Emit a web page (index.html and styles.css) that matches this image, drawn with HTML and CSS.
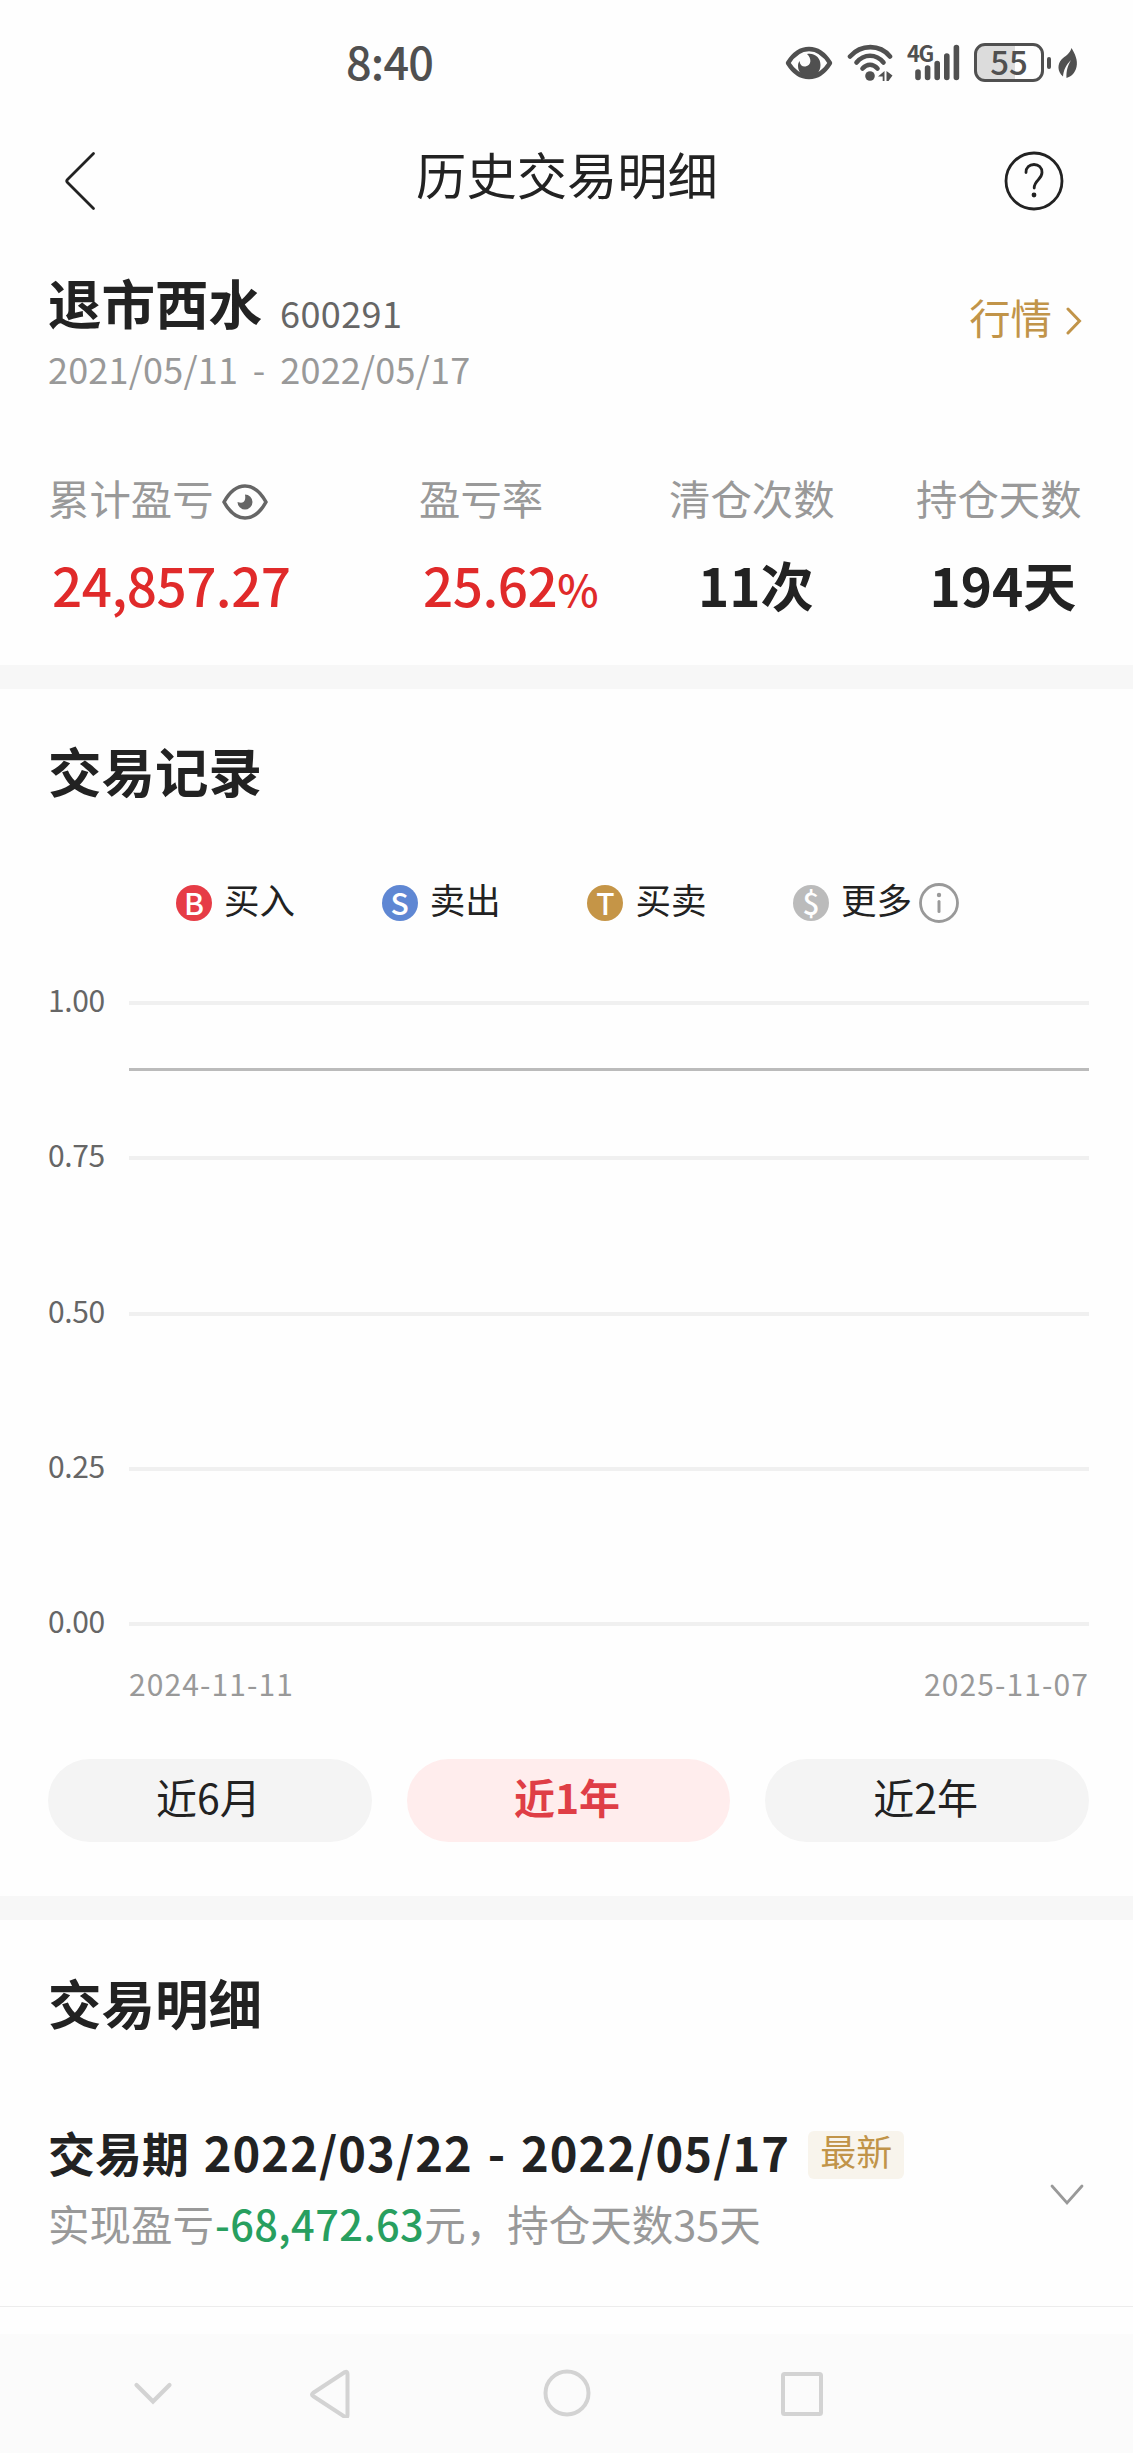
FILE: index.html
```html
<!DOCTYPE html>
<html lang="zh-CN">
<head>
    <meta charset="UTF-8">
    <meta name="viewport" content="width=device-width, initial-scale=1.0">
    <title>历史交易明细</title>
    <link rel="stylesheet" href="styles.css">
</head>
<body>
    <!-- Phone status bar -->
    <div class="status-bar">
        <span class="time">8:40</span>
        <div class="status-icons">
            <svg class="status-eye" width="48" height="34" viewBox="0 0 48 34">
                <path d="M3 17C8 9 15 3 24 3s16 6 21 14c-5 8-12 14-21 14S8 25 3 17z" fill="none" stroke="#505050" stroke-width="4.4" stroke-linejoin="round"/>
                <path d="M22 8C30 6.500 35.500 12 35.500 19c0 7-5 12-11.500 12s-11-5-11-11c0-2 .5-3.500 1.500-5 .5 4 3 6 6 5.500 6-1 6.500-8 1.500-12.500z" fill="#505050"/>
            </svg>
            <svg class="wifi" width="47" height="38" viewBox="0 0 47 38">
                <g fill="none" stroke="#505050" stroke-width="4.600" stroke-linecap="round">
                    <path d="M3 12.500C14 0 33 0 43 12.500"/>
                    <path d="M9.500 18.500C17 9.500 29 9.500 36.500 18.500"/>
                    <path d="M15.500 24.500C20 19.500 26 19.500 30.500 24.500"/>
                </g>
                <circle cx="23" cy="32" r="4.800" fill="#505050"/>
                <path d="M37.500 27v10h-1.800v-4.500H31zM39.500 27l6 4.500-4 5.500h-2z" fill="#505050"/>
            </svg>
            <div class="signal">
                <span class="network">4G</span>
                <svg width="46" height="37" viewBox="0 0 46 37">
                    <g stroke="#505050" stroke-width="5.600" stroke-linecap="round">
                        <path d="M3 28v5.500M12.600 24v9.500M22.200 19.500v14M31.800 12v21.500M41.400 3.500v30"/>
                    </g>
                </svg>
            </div>
            <div class="battery"><span>55</span></div>
            <div class="battery-cap"></div>
            <svg class="leaf" width="21" height="32" viewBox="0 0 21 32">
                <path d="M14.500 1C18 7 21 13 19.500 20c-1.500 6-5 9.500-10 11C9 24 11 18 14 13 9 18 6.500 23 6 29.500 0 24 .5 17 4.500 12.500 8 9 13 7 14.500 1z" fill="#505050"/>
            </svg>
        </div>
    </div>

    <header class="header">
        <svg class="back" width="32" height="60" viewBox="0 0 32 60">
            <path d="M29.500 2.500L3.500 28.500q-1.500 1.500 0 3L29.500 57.500" fill="none" stroke="#222" stroke-width="2.800" stroke-linecap="round"/>
        </svg>
        <h1>历史交易明细</h1>
        <svg class="help" width="60" height="60" viewBox="0 0 60 60">
            <circle cx="30" cy="30" r="28" fill="none" stroke="#222" stroke-width="2.800"/>
            <path d="M22 21.500c0-5 3.500-8 8-8s8 3 8 8c0 7-7.800 7.500-7.800 15.500" fill="none" stroke="#222" stroke-width="2.800" stroke-linecap="round"/>
            <circle cx="30" cy="44" r="2.400" fill="#222"/>
        </svg>
    </header>

    <section class="summary">
        <div class="stock">
            <div>
                <div class="stock-title">
                    <h2>退市西水</h2>
                    <span class="code">600291</span>
                </div>
                <div class="stock-dates">2021/05/11 - 2022/05/17</div>
            </div>
            <a class="quote">行情
                <svg width="16" height="28" viewBox="0 0 16 28">
                    <path d="M2 2l11.500 12L2 26" fill="none" stroke="#c19449" stroke-width="3" stroke-linecap="round"/>
                </svg>
            </a>
        </div>
        <div class="stats">
            <div class="stat">
                <div class="label">累计盈亏
                    <svg class="eye" width="48" height="38" viewBox="0 0 48 38">
                        <path d="M3 19C8 10 15 3 24 3s16 7 21 16c-5 9-12 16-21 16S8 28 3 19z" fill="none" stroke="#666" stroke-width="3.600" stroke-linejoin="round"/>
                        <path d="M24 11.500a7.500 7.500 0 1 1-7.500 7.500q4 1.500 6 0 2.500-2 1.500-7.500z" fill="#666"/>
                    </svg>
                </div>
                <div class="value up">24,857.27</div>
            </div>
            <div class="stat">
                <div class="label">盈亏率</div>
                <div class="value up">25.62<span class="percent">%</span></div>
            </div>
            <div class="stat center">
                <div class="label">清仓次数</div>
                <div class="value">11次</div>
            </div>
            <div class="stat center">
                <div class="label">持仓天数</div>
                <div class="value">194天</div>
            </div>
        </div>
    </section>

    <!-- Trade chart -->
    <section class="records">
        <h2>交易记录</h2>
        <div class="legend">
            <div class="legend-item"><span class="badge buy">B</span><span class="name">买入</span></div>
            <div class="legend-item"><span class="badge sell">S</span><span class="name">卖出</span></div>
            <div class="legend-item"><span class="badge both">T</span><span class="name">买卖</span></div>
            <div class="legend-item"><span class="badge more">$</span><span class="name">更多</span>
                <svg class="info" width="40" height="40" viewBox="0 0 40 40">
                    <circle cx="20" cy="20" r="18.500" fill="none" stroke="#999" stroke-width="2.800"/>
                    <circle cx="20" cy="12" r="2.200" fill="#999"/>
                    <path d="M20 18.500v10" stroke="#999" stroke-width="3" stroke-linecap="round"/>
                </svg>
            </div>
        </div>
        <div class="chart">
            <div class="grid-row"><span>1.00</span><i></i></div>
            <div class="grid-row"><span>0.75</span><i></i></div>
            <div class="grid-row"><span>0.50</span><i></i></div>
            <div class="grid-row"><span>0.25</span><i></i></div>
            <div class="grid-row"><span>0.00</span><i></i></div>
            <div class="price-line"></div>
        </div>
        <div class="axis">
            <span>2024-11-11</span>
            <span>2025-11-07</span>
        </div>
        <div class="ranges">
            <button>近6月</button>
            <button class="active">近1年</button>
            <button>近2年</button>
        </div>
    </section>

    <section class="details">
        <h2>交易明细</h2>
        <div class="period">
            <div>
                <div class="period-title">
                    <h3>交易期 <span>2022/03/22 - 2022/05/17</span></h3>
                    <span class="tag">最新</span>
                </div>
                <p>实现盈亏<span class="down">-68,472.63</span>元，持仓天数35天</p>
            </div>
            <svg class="expand" width="36" height="22" viewBox="0 0 36 22">
                <path d="M3 2l15 17L33 2" fill="none" stroke="#999" stroke-width="2.800" stroke-linecap="round"/>
            </svg>
        </div>
    </section>

    <!-- System navigation -->
    <nav class="nav">
        <svg width="42" height="50" viewBox="0 0 42 50">
            <path d="M4.500 17L21 33.500 37.500 17" fill="none" stroke="#d3d3d3" stroke-width="4.200" stroke-linecap="round"/>
        </svg>
        <svg width="44" height="50" viewBox="0 0 44 50">
            <path d="M36 4L4 25q-2 1.500 0 3L36 49q2.500 1 2.500-2V6q0-3-2.500-2z" fill="none" stroke="#d3d3d3" stroke-width="4" stroke-linejoin="round"/>
        </svg>
        <svg width="50" height="50" viewBox="0 0 50 50">
            <circle cx="25" cy="25" r="21.500" fill="none" stroke="#d3d3d3" stroke-width="4"/>
        </svg>
        <svg width="44" height="50" viewBox="0 0 44 50">
            <rect x="3" y="6" width="38" height="40" rx="1.500" fill="none" stroke="#d3d3d3" stroke-width="4"/>
        </svg>
    </nav>
</body>
</html>
```

FILE: styles.css
```css
* {
    box-sizing: border-box;
}

body {
    margin: 0;
    width: 1133px;
    height: 2453px;
    display: flex;
    flex-direction: column;
    overflow: hidden;
    font-family: "Noto Sans CJK SC", "Noto Sans", sans-serif;
    background-color: #fefefe;
    color: #222;
}

h1, h2, h3, p {
    margin: 0;
}

h2 {
    font-size: 53.5px;
    line-height: 54px;
    font-weight: 700;
}

svg {
    display: block;
    flex: none;
}

/* status bar */
.status-bar {
    height: 125px;
    padding: 0 55px 0 346px;
    display: flex;
    align-items: center;
    justify-content: space-between;
    color: #505050;
}

.time {
    font-size: 45px;
    line-height: 46px;
    font-weight: 500;
    letter-spacing: -0.8px;
    margin-bottom: 4px;
}

.status-icons {
    display: flex;
    align-items: center;
}

.wifi {
    margin-left: 14px;
}

.signal {
    position: relative;
    margin-left: 21px;
}

.network {
    position: absolute;
    left: -8px;
    top: -4px;
    font-size: 22px;
    line-height: 24px;
    font-weight: 700;
    letter-spacing: -1.5px;
}

.battery {
    width: 70px;
    height: 39px;
    margin-left: 13px;
    border: 3px solid #505050;
    border-radius: 11px;
    background: linear-gradient(to right, #dcdcdc 60%, #fefefe 60%);
    text-align: center;
    font-size: 33px;
    line-height: 30px;
    font-weight: 500;
}

.battery-cap {
    width: 4px;
    height: 12px;
    margin: 0 6px 0 3px;
    border-radius: 2px;
    background-color: #505050;
}

/* page header */
.header {
    height: 113px;
    padding: 0 69px 2px 64px;
    display: flex;
    align-items: center;
    justify-content: space-between;
}

.header h1 {
    font-size: 50.3px;
    line-height: 50px;
    font-weight: 400;
    margin: 0 0 15px 34px;
}

/* stock summary */
.summary {
    height: 427px;
    padding: 36px 48px 0;
}

.stock {
    display: flex;
    justify-content: space-between;
    align-items: flex-start;
}

.stock-title {
    display: flex;
    align-items: baseline;
    height: 54px;
    margin-bottom: 22px;
}

.stock-title h2 {
    padding-top: 1px;
}

.code {
    position: relative;
    top: 3px;
    margin-left: 18px;
    font-size: 36px;
    line-height: 36px;
    letter-spacing: 0.4px;
    color: #666;
}

.stock-dates {
    font-size: 36px;
    line-height: 36px;
    letter-spacing: 0.2px;
    word-spacing: 6.500px;
    color: #999;
}

.quote {
    margin: 21px 3px 0 0;
    display: flex;
    align-items: center;
    gap: 14px;
    font-size: 41.4px;
    line-height: 42px;
    color: #c19449;
}

.quote svg {
    margin-top: 10px;
}

.stats {
    margin-top: 90px;
    display: grid;
    grid-template-columns: 371px 250px 247px 166px;
    justify-items: start;
}

.label {
    display: flex;
    align-items: center;
    gap: 7px;
    height: 42px;
    font-size: 41.4px;
    line-height: 42px;
    color: #999;
    white-space: nowrap;
}

.eye {
    margin-top: 9px;
}

.value {
    margin-top: 39px;
    padding-left: 4px;
    font-size: 53px;
    line-height: 55px;
    font-weight: 700;
    white-space: nowrap;
}

.center .value {
    padding-left: 8px;
    text-align: center;
}

.value.up {
    font-weight: 500;
    letter-spacing: -0.5px;
    color: #e02a2a;
}

.percent {
    font-size: 44px;
}

/* trade records */
.records {
    height: 1255px;
    padding: 54px 44px 0 48px;
    border-top: 24px solid #f7f7f7;
    border-bottom: 24px solid #f7f7f7;
}

.legend {
    display: flex;
    height: 40px;
    margin-top: 86px;
    padding-left: 128px;
}

.legend-item {
    width: 205.700px;
    flex: none;
    display: flex;
    align-items: center;
}

.badge {
    width: 36px;
    height: 36px;
    border-radius: 50%;
    color: #fff;
    font-size: 30px;
    line-height: 34px;
    font-weight: 500;
    text-align: center;
}

.buy {
    background-color: #e63c46;
}

.sell {
    background-color: #5f87d3;
}

.both {
    background-color: #c59547;
}

.more {
    background-color: #bbb;
}

.name {
    margin: 0 0 9px 12px;
    font-size: 35.5px;
    line-height: 36px;
}

.info {
    margin-left: 7px;
}

.chart {
    position: relative;
    height: 651px;
    margin-top: 65px;
    display: flex;
    flex-direction: column;
    justify-content: space-between;
}

.grid-row {
    height: 30px;
    display: flex;
    align-items: center;
}

.grid-row span {
    width: 81px;
    margin-bottom: 8px;
    font-size: 30px;
    line-height: 30px;
    letter-spacing: -0.4px;
    color: #666;
}

.grid-row i {
    flex: 1;
    height: 4px;
    background-color: #f0f0f0;
}

.price-line {
    position: absolute;
    left: 81px;
    right: 0;
    top: 80px;
    height: 3px;
    background-color: #bbb;
}

.axis {
    display: flex;
    justify-content: space-between;
    margin: 29px 0 0 81px;
    font-size: 30px;
    line-height: 30px;
    letter-spacing: 1.1px;
    color: #999;
}

.ranges {
    display: flex;
    gap: 35px;
    margin: 61px 0 0;
}

.ranges button {
    flex: 1;
    height: 83px;
    padding: 0 3px 9px 0;
    border: none;
    border-radius: 42px;
    background-color: #f4f4f4;
    font-family: inherit;
    font-size: 41px;
    line-height: 42px;
    color: #222;
}

.ranges .active {
    background-color: #ffeded;
    color: #df3e46;
    font-weight: 700;
}

/* trade details */
.details {
    height: 387px;
    padding: 55px 46px 0 48px;
    border-bottom: 1px solid #ececec;
}

.period {
    margin-top: 98px;
    display: flex;
    justify-content: space-between;
    align-items: center;
}

.period-title {
    display: flex;
    height: 48px;
    margin-bottom: 27px;
}

.period h3 {
    font-size: 47px;
    line-height: 49px;
    font-weight: 700;
}

.period h3 span {
    margin-left: 4px;
    letter-spacing: 1.1px;
    word-spacing: 3px;
}

.tag {
    width: 96px;
    height: 48px;
    margin: 4px 0 0 18px;
    border-radius: 6px;
    background-color: #f8f4ec;
    color: #c19449;
    font-size: 36px;
    line-height: 38px;
    text-align: center;
}

.period p {
    font-size: 41.5px;
    line-height: 42px;
    color: #999;
}

.down {
    margin-left: 1px;
    letter-spacing: 0.4px;
    color: #289f5f;
    font-weight: 500;
}

.expand {
    margin: 18px 2px 0 0;
}

/* bottom navigation */
.nav {
    margin-top: 27px;
    height: 119px;
    padding: 0 0 2px 132px;
    display: flex;
    align-items: center;
    gap: 135px;
    background-color: #fbfbfb;
}

.nav svg:nth-child(3) {
    margin-left: 54px;
}

.nav svg:nth-child(4) {
    margin-left: 53px;
}
```
